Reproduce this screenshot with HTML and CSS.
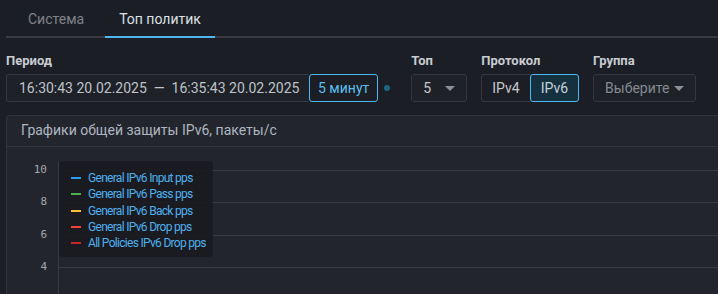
FILE: index.html
```html
<!DOCTYPE html>
<html lang="ru">
<head>
    <meta charset="UTF-8">
    <title>Топ политик</title>
    <link rel="stylesheet" href="styles.css">
</head>
<body>
    <div class="tabs">
        <div class="tab">Система</div>
        <div class="tab active">Топ политик</div>
    </div>

    <div class="filters">
        <div class="field">
            <div class="label">Период</div>
            <div class="period">
                <div class="range">16:30:43 20.02.2025 &nbsp;—&nbsp; 16:35:43 20.02.2025</div>
                <div class="preset">5 минут</div>
                <span class="dot"></span>
            </div>
        </div>
        <div class="field">
            <div class="label">Топ</div>
            <div class="select top-select">5 <span class="caret"></span></div>
        </div>
        <div class="field">
            <div class="label">Протокол</div>
            <div class="segmented">
                <div class="seg">IPv4</div>
                <div class="seg on">IPv6</div>
            </div>
        </div>
        <div class="field">
            <div class="label">Группа</div>
            <div class="select group-select">Выберите <span class="caret"></span></div>
        </div>
    </div>

    <div class="panel">
        <div class="panel-title">Графики общей защиты IPv6, пакеты/с</div>
        <div class="chart">
            <div class="yaxis">
                <div class="tick"><span>10</span></div>
                <div class="tick"><span>8</span></div>
                <div class="tick"><span>6</span></div>
                <div class="tick"><span>4</span></div>
            </div>
            <div class="plot">
                <div class="gridline"></div>
                <div class="gridline"></div>
                <div class="gridline"></div>
                <div class="gridline"></div>

                <div class="legend">
                    <div class="legend-item"><i class="mark input"></i>General IPv6 Input pps</div>
                    <div class="legend-item"><i class="mark pass"></i>General IPv6 Pass pps</div>
                    <div class="legend-item"><i class="mark back"></i>General IPv6 Back pps</div>
                    <div class="legend-item"><i class="mark drop"></i>General IPv6 Drop pps</div>
                    <div class="legend-item"><i class="mark policy"></i>All Policies IPv6 Drop pps</div>
                </div>
            </div>
        </div>
    </div>
</body>
</html>
```

FILE: styles.css
```css
body {
    margin: 0;
    padding: 0 0 0 6px;
    background: #1b1e24;
    color: #c4c8ce;
    font-family: Roboto, 'Liberation Sans', sans-serif;
    font-size: 14px;
    overflow: hidden;
    height: 294px;
}

/* табы */
.tabs {
    display: flex;
    height: 36px;
    border-bottom: 2px solid #383b40;
}

.tab {
    padding: 0 21px 0 22px;
    line-height: 38px;
    color: #7e848c;
}

.tab.active {
    padding: 0 14px;
    color: #dde1e6;
    border-bottom: 2px solid #4db8f0;
    margin-bottom: -2px;
}

/* фильтры */
.filters {
    display: flex;
    margin-top: 15px;
}

.field {
    margin-right: 14px;
}

.label {
    font-size: 13px;
    font-weight: bold;
    color: #c8ccd2;
    line-height: 16px;
    margin-bottom: 5px;
}

.period {
    display: flex;
    align-items: center;
}

.range,
.select,
.segmented {
    height: 26px;
    border: 1px solid #34373d;
    border-radius: 3px;
    background: #1e2127;
    line-height: 26px;
}

.range {
    width: 290px;
    padding-left: 12px;
    color: #bfc3ca;
    border-radius: 3px 0 0 3px;
    border-right: none;
}

.preset {
    height: 26px;
    line-height: 26px;
    padding: 0 8px;
    border: 1px solid #4db8f0;
    border-radius: 3px;
    color: #5cbef0;
}

.dot {
    width: 6px;
    height: 6px;
    border-radius: 50%;
    background: #1a6688;
    margin-left: 6px;
    margin-right: 7px;
}

.select {
    display: flex;
    align-items: center;
    justify-content: space-between;
    padding: 0 11px;
}

.top-select {
    width: 32px;
    color: #c4c8ce;
}

.group-select {
    width: 79px;
    color: #858b93;
}

.caret {
    width: 0;
    height: 0;
    border-left: 5px solid transparent;
    border-right: 5px solid transparent;
    border-top: 5px solid #8a9098;
}

.segmented {
    display: flex;
    background: none;
    border: none;
}

.seg {
    height: 26px;
    padding: 0 10px;
    border: 1px solid #34373d;
    border-right: none;
    border-radius: 3px 0 0 3px;
    color: #c4c8ce;
}

.seg.on {
    border: 1px solid #4db8f0;
    border-radius: 3px;
    background: #15303e;
    color: #c4d2dc;
}

/* панель графика */
.panel {
    margin-top: 13px;
    margin-right: -20px;
    background: #22252c;
    border: 1px solid #30333a;
    border-radius: 4px;
    height: 190px;
}

.panel-title {
    height: 30px;
    line-height: 28px;
    padding-left: 14px;
    color: #aeb6c2;
    border-bottom: 1px solid #353840;
}

.chart {
    display: flex;
    padding-top: 15px;
}

.yaxis {
    width: 40px;
    padding-right: 11px;
    padding-top: 8px;
    font-family: 'DejaVu Sans Mono', monospace;
    font-size: 11px;
    color: #a2a8b0;
    text-align: right;
}

.tick {
    height: 32.33px;
    line-height: 0;
}

.plot {
    flex: 1;
    position: relative;
    padding-top: 8px;
    border-left: 1px solid #363a41;
}

.gridline {
    height: 32.33px;
    box-sizing: border-box;
    border-top: 1px solid #363a42;
}

.legend {
    position: absolute;
    left: 0;
    top: -1px;
    padding: 9px 7px 6px 12px;
    background: rgba(24, 26, 31, 0.85);
    border-radius: 4px;
}

.legend-item {
    display: flex;
    align-items: center;
    height: 16.3px;
    font-size: 12px;
    letter-spacing: -0.7px;
    color: #4fb0ee;
    white-space: nowrap;
}

.mark {
    flex-shrink: 0;
    width: 10px;
    height: 2px;
    margin-right: 7px;
}

.mark.input { background: #2f9bf0; }
.mark.pass { background: #4caf50; }
.mark.back { background: #fbc02d; }
.mark.drop { background: #f44336; }
.mark.policy { background: #c62828; }
```
